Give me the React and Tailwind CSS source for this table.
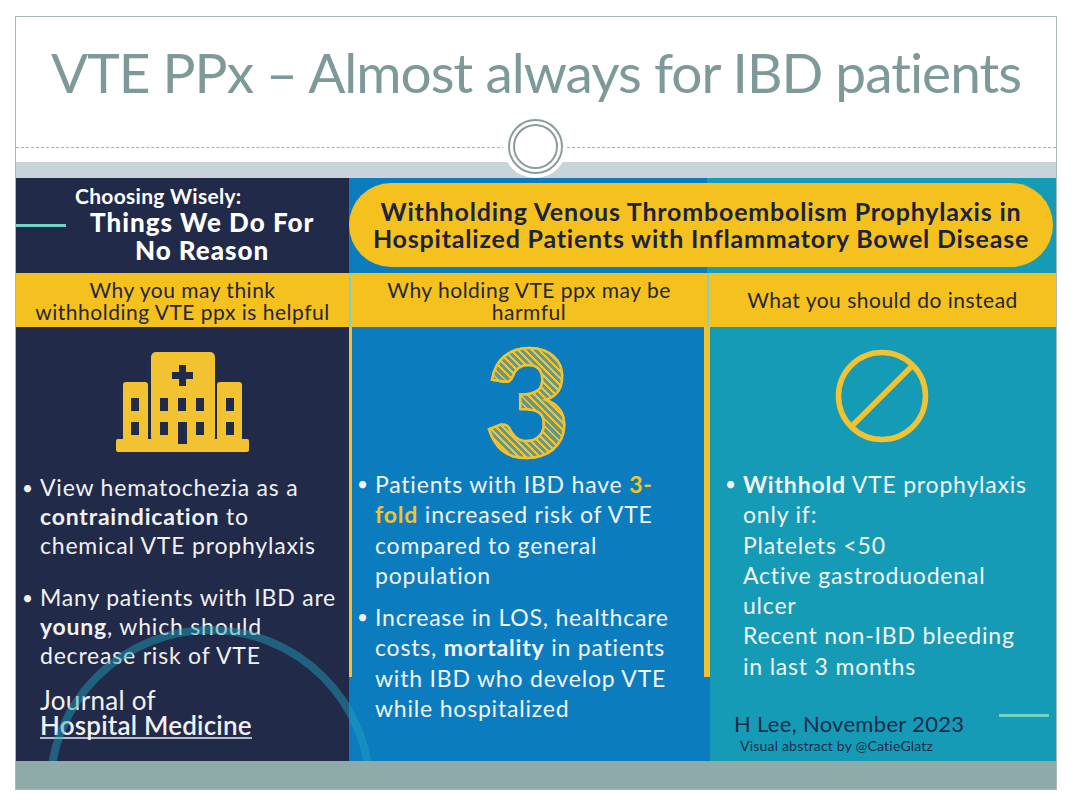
export default function App() {
  const navy = "bg-[#222a4a]";
  const Bullet = ({ lines, className = "" }) => (
    <li className={`flex ${className}`}>
      <span className="-ml-[3px] w-[18px] shrink-0 tracking-normal text-[19px]">•</span>
      <div className="whitespace-nowrap">
        {lines.map((l, i) => (
          <p key={i}>{l}</p>
        ))}
      </div>
    </li>
  );
  return (
    <div className="w-[1074px] h-[801px] bg-white pt-[16px] pl-[15px] font-['Lato',sans-serif]">
      <div className="relative w-[1042px] h-[774px] border border-[#a9b8b8] flex flex-col">
        {/* Title area */}
        <div className="h-[145px] flex flex-col">
          <h1 className="mt-[25px] text-center text-[55px] leading-[60px] font-normal text-[#7d9999] tracking-[-1px] whitespace-nowrap">
            VTE PPx – Almost always for IBD patients
          </h1>
          <div className="mt-[45px] border-t border-dashed border-[#a3b2b2]" />
        </div>
        <div className="h-[16px] bg-[#c7d4d9]" />

        {/* Infographic */}
        <div className="relative h-[583px] grid grid-cols-[333px_358px_349px] grid-rows-[95px_54px_434px] overflow-hidden">
          {/* header left */}
          <div className={`${navy} flex items-start`}>
            <div className="mt-[46px] w-[50px] h-[3px] bg-[#6fd4c2] shrink-0" />
            <div className="pl-[9px] pt-[6px] text-white font-bold whitespace-nowrap">
              <p className="text-[21px] leading-[24px] tracking-[0.3px]">Choosing Wisely:</p>
              <div className="pl-[15px] flex flex-col items-center font-black tracking-[1px]">
                <p className="text-[26px] leading-[28px]">Things We Do For</p>
                <p className="text-[26px] leading-[29px]">No Reason</p>
              </div>
            </div>
          </div>
          {/* header right */}
          <div className="col-span-2 bg-[linear-gradient(90deg,#0b7dbf_358px,#169bb7_358px)] pt-[5px] pb-[6px] pr-[3px] pl-0">
            <div className="h-full rounded-full bg-[#f4c11f] flex flex-col items-center justify-center text-[#1c2340] font-bold text-[25px] leading-[27px] tracking-[0.8px] whitespace-nowrap">
              <p>Withholding Venous Thromboembolism Prophylaxis in</p>
              <p>Hospitalized Patients with Inflammatory Bowel Disease</p>
            </div>
          </div>

          {/* yellow row */}
          <div className="bg-[#f4c11f] flex flex-col items-center justify-center text-[#26263a] text-[21px] leading-[22px] tracking-[0.5px] pt-[2px] whitespace-nowrap">
            <p>Why you may think</p>
            <p>withholding VTE ppx is helpful</p>
          </div>
          <div className="bg-[#f4c11f] border-l-2 border-[#7fd0d6] flex flex-col items-center justify-center text-[#26263a] text-[21px] leading-[22px] tracking-[0.5px] pt-[2px] whitespace-nowrap">
            <p>Why holding VTE ppx may be</p>
            <p>harmful</p>
          </div>
          <div className="bg-[#f4c11f] border-l-2 border-[#7fd0d6] flex flex-col items-center justify-center text-[#26263a] text-[21px] leading-[22px] tracking-[0.5px] whitespace-nowrap">
            <p>What you should do instead</p>
          </div>

          {/* body left */}
          <div className={`${navy} relative z-0 flex flex-col pl-[9px] text-[#f1f1f1] text-[23px] leading-[29px] tracking-[0.8px]`}>
            <div className="pt-[25px] flex justify-center pr-[9px]">
              <svg width="133" height="100" viewBox="0 0 133 100">
                <rect x="0" y="87" width="133" height="13" rx="2" fill="#f2c230" />
                <rect x="7" y="30" width="25" height="60" rx="3" fill="#f2c230" />
                <rect x="101" y="30" width="25" height="60" rx="3" fill="#f2c230" />
                <rect x="35" y="0" width="64" height="90" rx="5" fill="#f2c230" />
                <path d="M63 13h7v7h7v7h-7v7h-7v-7h-7v-7h7z" fill="#222a4a" />
                <rect x="15" y="46" width="8" height="13" fill="#222a4a" />
                <rect x="15" y="70" width="8" height="13" fill="#222a4a" />
                <rect x="110" y="46" width="8" height="13" fill="#222a4a" />
                <rect x="110" y="70" width="8" height="13" fill="#222a4a" />
                <rect x="44" y="46" width="8" height="13" fill="#222a4a" />
                <rect x="62" y="46" width="8" height="13" fill="#222a4a" />
                <rect x="80" y="46" width="8" height="13" fill="#222a4a" />
                <rect x="44" y="70" width="8" height="13" fill="#222a4a" />
                <rect x="80" y="70" width="8" height="13" fill="#222a4a" />
                <rect x="62" y="70" width="9" height="22" fill="#222a4a" />
              </svg>
            </div>
            <ul className="mt-[21px]">
              <Bullet
                lines={[
                  "View hematochezia as a",
                  <>
                    <b>contraindication</b> to
                  </>,
                  "chemical VTE prophylaxis",
                ]}
              />
              <Bullet
                className="mt-[23px]"
                lines={[
                  "Many patients with IBD are",
                  <>
                    <b>young</b>, which should
                  </>,
                  "decrease risk of VTE",
                ]}
              />
            </ul>
            <div className="mt-[18px] ml-[15px] text-[26px] leading-[25px] tracking-normal whitespace-nowrap">
              <p className="font-normal tracking-[0.3px]">Journal of</p>
              <p className="font-semibold inline-block border-b-2 border-[#b9bcc8] leading-[24px] tracking-[0.2px]">Hospital Medicine</p>
            </div>
          </div>

          {/* body middle */}
          <div className="relative bg-[#0b7dbf] flex flex-col text-[#f3f3f3] text-[23px] leading-[30.3px] tracking-[0.8px] pl-[11px]">
            <div className="absolute left-0 top-0 w-[3px] h-[350px] bg-[#f2c230]" />
            <div className="absolute right-0 top-0 w-[3px] h-[350px] bg-[#f2c230]" />
            <div className="h-[142px] flex justify-center items-center pt-[3px] pr-[11px]">
              <span className="text-[148px] leading-none font-black text-transparent bg-clip-text bg-[repeating-linear-gradient(45deg,#f2c230_0px,#f2c230_2px,rgba(242,194,48,0.4)_2px,rgba(242,194,48,0.4)_5px)] [-webkit-text-stroke:2.5px_#f2c230]">
                3
              </span>
            </div>
            <ul>
              <Bullet
                lines={[
                  <>
                    Patients with IBD have <b className="text-[#f2c230]">3-</b>
                  </>,
                  <>
                    <b className="text-[#f2c230]">fold</b> increased risk of VTE
                  </>,
                  "compared to general",
                  "population",
                ]}
              />
              <Bullet
                className="mt-[12px]"
                lines={[
                  "Increase in LOS, healthcare",
                  <>
                    costs, <b>mortality</b> in patients
                  </>,
                  "with IBD who develop VTE",
                  "while hospitalized",
                ]}
              />
            </ul>
          </div>

          {/* body right */}
          <div className="relative bg-[#169bb7] flex flex-col text-[#f3f3f3] text-[23px] leading-[30.3px] tracking-[0.8px] pl-[21px] pr-[8px]">
            <div className="absolute left-0 top-0 w-[3px] h-[350px] bg-[#f2c230]" />
            <div className="absolute left-0 top-[350px] w-[3px] bottom-0 bg-[#0b7dbf]" />
            <div className="h-[142px] flex justify-center items-start pt-[22px] pr-[13px]">
              <svg width="94" height="94" viewBox="0 0 94 94">
                <circle cx="47" cy="47" r="43.5" fill="none" stroke="#f2c230" strokeWidth="5.5" />
                <line x1="17" y1="77" x2="77" y2="17" stroke="#f2c230" strokeWidth="5.5" />
              </svg>
            </div>
            <ul>
              <Bullet
                lines={[
                  <>
                    <b>Withhold</b> VTE prophylaxis
                  </>,
                  "only if:",
                  "Platelets <50",
                  "Active gastroduodenal",
                  "ulcer",
                  "Recent non-IBD bleeding",
                  "in last 3 months",
                ]}
              />
            </ul>
            <div className="mt-[30px] flex items-start text-[#1f2b4b] tracking-normal">
              <div className="whitespace-nowrap pl-[6px]">
                <p className="text-[22px] leading-[26px] tracking-[0.3px]">H Lee, November 2023</p>
                <p className="text-[14px] leading-[18px] pl-[6px] tracking-[0.2px]">Visual abstract by @CatieGlatz</p>
              </div>
              <div className="ml-auto mr-[-1px] mt-[3px] w-[50px] h-[3px] bg-[#6fd4c2]" />
            </div>
          </div>

          {/* decorative arc */}
          <svg className="absolute left-0 top-0 pointer-events-none" width="1040" height="583" viewBox="0 0 1040 583">
            <circle cx="194" cy="612" r="160" fill="none" stroke="#20a4bd" strokeOpacity="0.45" strokeWidth="8" />
          </svg>
        </div>
        <div className="flex-1 bg-[#8eaaa9]" />

        {/* circle ornament */}
        <div className="absolute left-[487px] top-[97px] w-[64px] h-[64px] rounded-full bg-white flex items-center justify-center">
          <div className="w-[55px] h-[55px] rounded-full border-[2px] border-[#8c9c9c] flex items-center justify-center">
            <div className="w-[45px] h-[45px] rounded-full border-[2px] border-[#8c9c9c]" />
          </div>
        </div>
      </div>
    </div>
  );
}
